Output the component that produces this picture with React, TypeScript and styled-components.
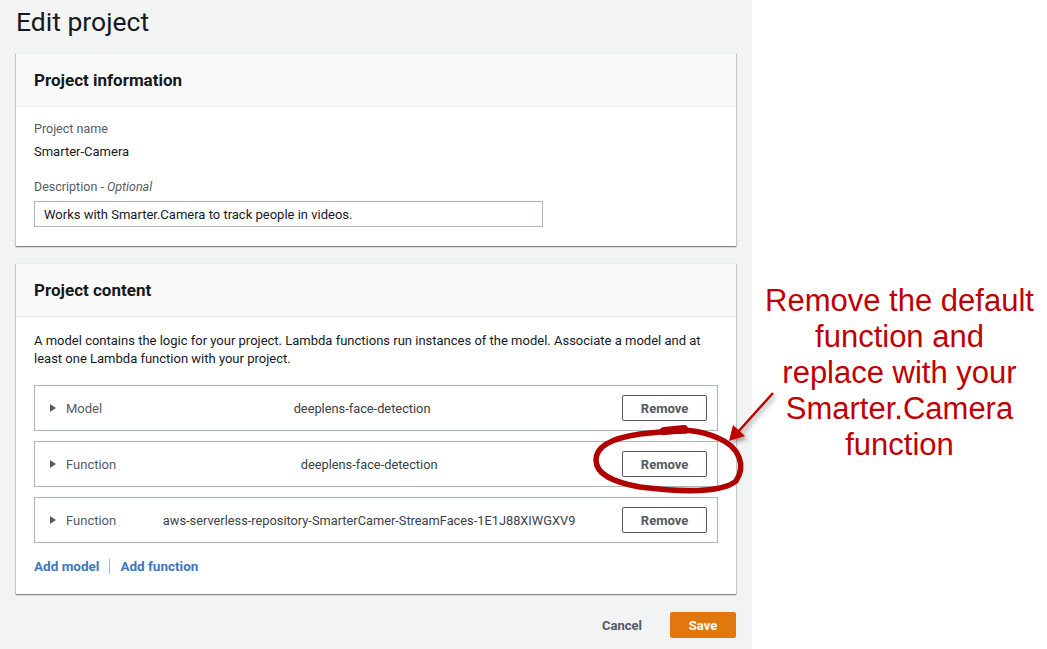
import React from "react";
import styled, { createGlobalStyle } from "styled-components";

const Global = createGlobalStyle`
  html, body { margin: 0; padding: 0; background: #ffffff; }
  body { font-family: "Roboto", "Liberation Sans", Arial, sans-serif; color: #16191f; }
  * { box-sizing: border-box; }
`;

const Page = styled.div`
  position: relative;
  display: flex;
  width: 1047px;
  height: 649px;
  overflow: hidden;
`;

const Main = styled.div`
  width: 752px;
  flex: none;
  background: #f2f3f3;
  padding: 0 16px;
  display: flex;
  flex-direction: column;
`;

const Title = styled.h1`
  margin: 0;
  height: 53px;
  padding-top: 5px;
  font-size: 26.5px;
  line-height: 34px;
  font-weight: 400;
  color: #16191f;
`;

const Card = styled.section<{ $mt?: number }>`
  background: #ffffff;
  margin-top: ${(p) => p.$mt ?? 0}px;
  border-top: 1px solid #eaeded;
  box-shadow: 0 1px 1px 0 rgba(0, 28, 36, 0.3), 1px 1px 1px 0 rgba(0, 28, 36, 0.15),
    -1px 1px 1px 0 rgba(0, 28, 36, 0.15);
`;

const CardHeader = styled.header`
  height: 53px;
  background: #fafafa;
  border-bottom: 1px solid #eaeded;
  display: flex;
  align-items: center;
  padding: 0 18px;
  font-size: 17px;
  font-weight: 700;
  color: #16191f;
`;

const CardBody = styled.div<{ $pt: number; $pb: number }>`
  padding: ${(p) => p.$pt}px 18px ${(p) => p.$pb}px;
  display: flex;
  flex-direction: column;
`;

const Label = styled.div<{ $mt?: number }>`
  font-size: 12.5px;
  line-height: 16px;
  color: #545b64;
  margin-top: ${(p) => p.$mt ?? 0}px;
  em { font-style: italic; }
`;

const Value = styled.div`
  font-size: 13px;
  line-height: 16px;
  color: #16191f;
  margin-top: 7px;
`;

const Input = styled.div`
  margin-top: 6px;
  width: 509px;
  height: 26px;
  border: 1px solid #aab7b8;
  padding: 0 9px;
  display: flex;
  align-items: center;
  font-size: 13px;
  color: #16191f;
`;

const Paragraph = styled.p`
  margin: 0;
  font-size: 13px;
  line-height: 18px;
  color: #16191f;
`;

const Rows = styled.div`
  margin-top: 17px;
  display: flex;
  flex-direction: column;
  gap: 10px;
`;

const Row = styled.div`
  height: 46px;
  border: 1px solid #aab7b8;
  display: flex;
  align-items: center;
  padding: 0 10px 0 15px;
`;

const Caret = styled.span`
  width: 0;
  height: 0;
  border-top: 4.5px solid transparent;
  border-bottom: 4.5px solid transparent;
  border-left: 6px solid #545b64;
  margin-right: 10px;
  flex: none;
`;

const RowLabel = styled.span`
  font-size: 13px;
  color: #545b64;
  flex: none;
`;

const RowValue = styled.span`
  flex: 1;
  text-align: center;
  font-size: 12.8px;
  color: #3b4148;
  white-space: nowrap;
`;

const RemoveButton = styled.button`
  width: 85px;
  height: 26px;
  flex: none;
  background: #ffffff;
  border: 1px solid #545b64;
  border-radius: 2px;
  font-family: inherit;
  font-size: 13px;
  font-weight: 700;
  color: #545b64;
  padding: 0;
`;

const Links = styled.div`
  margin-top: 15px;
  display: flex;
  align-items: center;
  gap: 10px;
  font-size: 13.5px;
  font-weight: 700;
  line-height: 16px;
`;

const Link = styled.a`
  color: #3b78c0;
  text-decoration: none;
`;

const Divider = styled.span`
  width: 1px;
  height: 15px;
  background: #aab7b8;
`;

const Footer = styled.div`
  margin-top: 18px;
  display: flex;
  justify-content: flex-end;
  align-items: center;
  gap: 28px;
`;

const TextButton = styled.button`
  background: none;
  border: none;
  padding: 0;
  font-family: inherit;
  font-size: 13px;
  font-weight: 700;
  color: #545b64;
`;

const PrimaryButton = styled.button`
  width: 66px;
  height: 26px;
  background: #e2770d;
  border: none;
  border-radius: 2px;
  font-family: inherit;
  font-size: 13px;
  font-weight: 700;
  color: #ffffff;
`;

const Side = styled.aside`
  flex: 1;
  background: #ffffff;
  padding-top: 283px;
  display: flex;
  justify-content: center;
`;

const Note = styled.div`
  font-family: "Liberation Sans", Arial, sans-serif;
  font-size: 31px;
  line-height: 36px;
  color: #c00000;
  text-align: center;
  white-space: pre-line;
`;

const Overlay = styled.svg`
  position: absolute;
  top: 0;
  left: 0;
  pointer-events: none;
`;

const items = [
  { kind: "Model", name: "deeplens-face-detection" },
  { kind: "Function", name: "deeplens-face-detection" },
  { kind: "Function", name: "aws-serverless-repository-SmarterCamer-StreamFaces-1E1J88XIWGXV9" },
];

export default function App() {
  return (
    <>
      <Global />
      <Page>
        <Main>
          <Title>Edit project</Title>
          <Card>
            <CardHeader>Project information</CardHeader>
            <CardBody $pt={14} $pb={19}>
              <Label>Project name</Label>
              <Value>Smarter-Camera</Value>
              <Label $mt={19}>
                Description - <em>Optional</em>
              </Label>
              <Input>Works with Smarter.Camera to track people in videos.</Input>
            </CardBody>
          </Card>
          <Card $mt={17}>
            <CardHeader>Project content</CardHeader>
            <CardBody $pt={15} $pb={20}>
              <Paragraph>
                A model contains the logic for your project. Lambda functions run instances of the model. Associate a model and at
                least one Lambda function with your project.
              </Paragraph>
              <Rows>
                {items.map((it, i) => (
                  <Row key={i}>
                    <Caret />
                    <RowLabel>{it.kind}</RowLabel>
                    <RowValue>{it.name}</RowValue>
                    <RemoveButton>Remove</RemoveButton>
                  </Row>
                ))}
              </Rows>
              <Links>
                <Link>Add model</Link>
                <Divider />
                <Link>Add function</Link>
              </Links>
            </CardBody>
          </Card>
          <Footer>
            <TextButton>Cancel</TextButton>
            <PrimaryButton>Save</PrimaryButton>
          </Footer>
        </Main>
        <Side>
          <Note>{"Remove the default\nfunction and\nreplace with your\nSmarter.Camera\nfunction"}</Note>
        </Side>
        <Overlay width="1047" height="649" viewBox="0 0 1047 649">
          <defs>
            <filter id="sh" x="-20%" y="-20%" width="140%" height="140%">
              <feDropShadow dx="2" dy="3" stdDeviation="2" floodColor="#000" floodOpacity="0.35" />
            </filter>
          </defs>
          <g filter="url(#sh)">
            <line x1="773" y1="393" x2="738" y2="432" stroke="#c00000" strokeWidth="2.5" />
            <polygon points="729,441 733,425 745,436" fill="#c00000" />
          </g>
          <path
            d="M664 432 C 676 428, 700 430, 718 438 C 740 447, 746 466, 736 481 C 722 493, 680 492, 640 487 C 612 482, 596 474, 596 460 C 596 446, 612 438, 640 434 C 655 432, 672 431, 686 431"
            fill="none"
            stroke="#b00000"
            strokeWidth="5.5"
            strokeLinecap="round"
            strokeLinejoin="round"
          />
          <path d="M664 431 L 684 429" stroke="#b00000" strokeWidth="8" strokeLinecap="round" />
        </Overlay>
      </Page>
    </>
  );
}
